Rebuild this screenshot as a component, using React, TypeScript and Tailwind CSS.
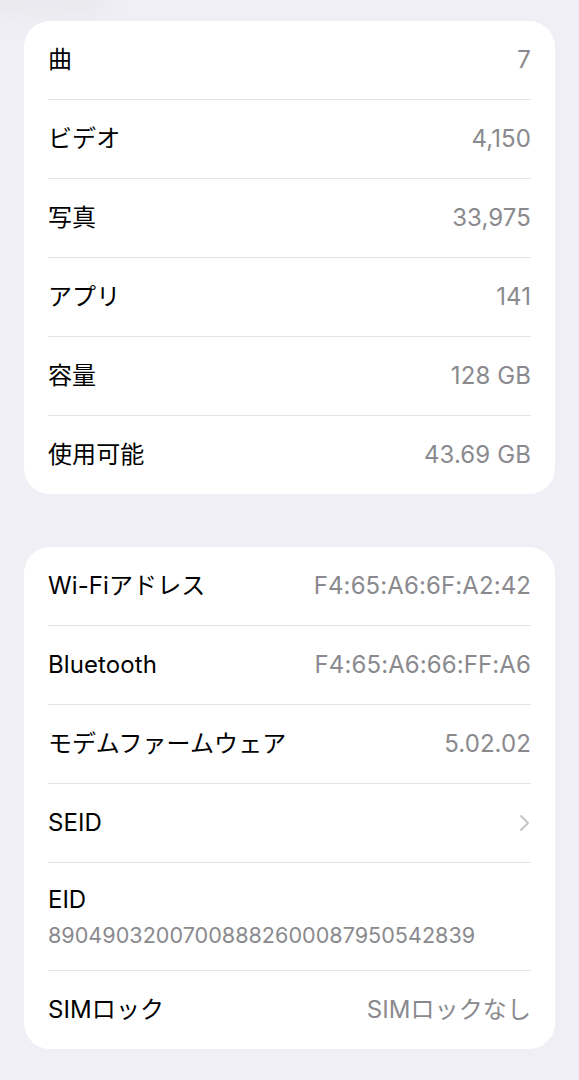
import React from "react";

type Row = { label: string; value?: string; chevron?: boolean; stacked?: boolean };

const card1: Row[] = [
  { label: "曲", value: "7" },
  { label: "ビデオ", value: "4,150" },
  { label: "写真", value: "33,975" },
  { label: "アプリ", value: "141" },
  { label: "容量", value: "128 GB" },
  { label: "使用可能", value: "43.69 GB" },
];

const card2: Row[] = [
  { label: "Wi-Fiアドレス", value: "F4:65:A6:6F:A2:42" },
  { label: "Bluetooth", value: "F4:65:A6:66:FF:A6" },
  { label: "モデムファームウェア", value: "5.02.02" },
  { label: "SEID", chevron: true },
  { label: "EID", value: "89049032007008882600087950542839", stacked: true },
  { label: "SIMロック", value: "SIMロックなし" },
];

function Chevron() {
  return (
    <svg width="12" height="18" viewBox="0 0 12 18" fill="none">
      <path d="M3 2l7 7-7 7" stroke="#c4c4c8" strokeWidth="2" strokeLinecap="round" strokeLinejoin="round" />
    </svg>
  );
}

function Card({ rows }: { rows: Row[] }) {
  return (
    <div className="mx-6 rounded-[26px] bg-white px-6">
      {rows.map((r, i) => {
        const last = i === rows.length - 1;
        const border = last ? "h-[78px]" : "h-[79px] border-b border-[#e4e4e8]";
        if (r.stacked) {
          return (
            <div key={i} className="flex h-[108px] flex-col justify-center border-b border-[#e4e4e8]">
              <div className="text-[24px] leading-[28px] text-black">{r.label}</div>
              <div className="mt-[8px] text-[21.6px] leading-[26px] text-[#8a8a8e]">{r.value}</div>
            </div>
          );
        }
        return (
          <div key={i} className={`flex items-center justify-between ${border}`}>
            <span className="text-[24px] tracking-[0.1px] text-black">{r.label}</span>
            {r.chevron ? (
              <span className="mr-[1px] flex items-center">
                <Chevron />
              </span>
            ) : (
              <span className="text-[24px] tracking-[0.1px] text-[#8a8a8e]">{r.value}</span>
            )}
          </div>
        );
      })}
    </div>
  );
}

export default function App() {
  return (
    <div
      className="relative min-h-[1080px] w-full overflow-hidden bg-[#f0eff5] pt-[21px]"
      style={{ fontFamily: 'Inter, "Noto Sans CJK JP", sans-serif' }}
    >
      <div className="absolute -left-4 -top-4 h-[28px] w-[120px] rounded-full bg-[#e6e6eb] blur-md" />
      <div className="relative">
        <Card rows={card1} />
      </div>
      <div className="mt-[53px]">
        <Card rows={card2} />
      </div>
    </div>
  );
}
